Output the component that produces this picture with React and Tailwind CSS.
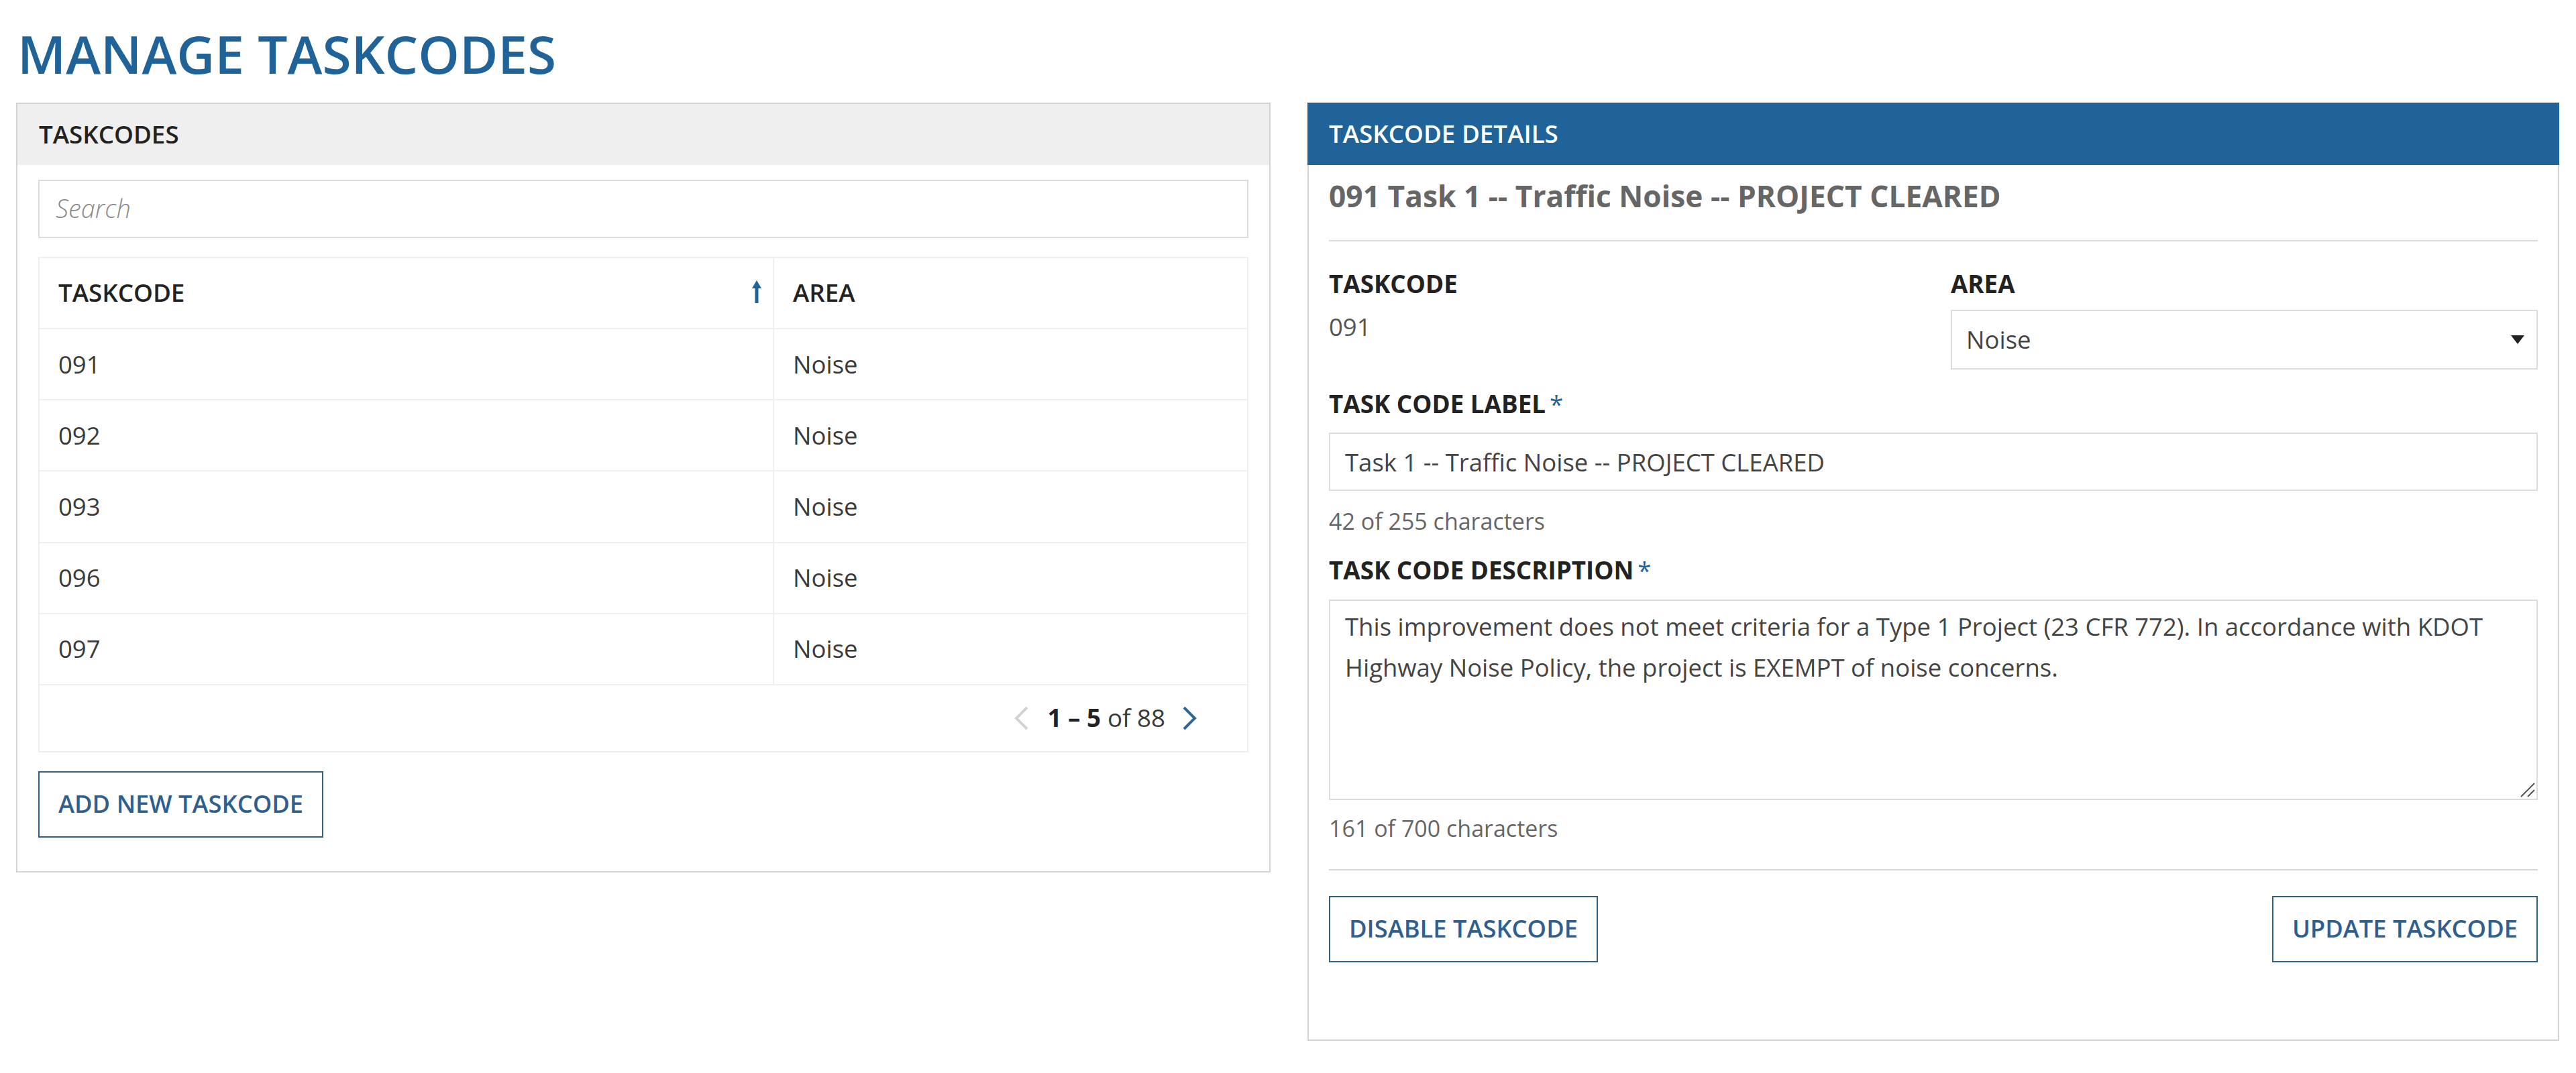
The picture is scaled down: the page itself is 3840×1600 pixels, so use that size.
const rows = ['091', '092', '093', '096', '097'];

const OutlineButton = ({ children }) => (
  <button className="h-[99px] px-[28px] pb-[3px] border-2 border-[#34607f] bg-white text-[36.3px] font-semibold text-[#2f5f8f] whitespace-nowrap">
    {children}
  </button>
);

const Label = ({ children, required }) => (
  <div className="text-[36.75px] leading-[46px] font-bold text-[#222]">
    {children}
    {required && <span className="ml-[6px] font-normal text-[#1f6399]">*</span>}
  </div>
);

const TaskcodeTable = () => (
  <div className="mt-[28px] border-2 border-[#efefef]">
    <div className="flex h-[106px] border-b-2 border-[#efefef] text-[36.75px] font-semibold text-[#222]">
      <div className="flex w-[1095px] items-center justify-between border-r-2 border-[#efefef] pl-[28px] pr-[15px]">
        <span>TASKCODE</span>
        <svg className="h-[34px] w-[18px] -translate-y-[2px]" viewBox="0 0 18 34" fill="#1f6399">
          <path d="M9 0 16 12H11.5V34H6.5V12H2Z" />
        </svg>
      </div>
      <div className="flex items-center pl-[28px]">AREA</div>
    </div>
    {rows.map((code) => (
      <div key={code} className="flex h-[106.2px] border-b-2 border-[#efefef] text-[36.5px] text-[#3a3a3a]">
        <div className="flex w-[1095px] items-center border-r-2 border-[#efefef] pl-[28px]">{code}</div>
        <div className="flex items-center pl-[28px]">Noise</div>
      </div>
    ))}
    <div className="flex h-[98px] items-center justify-end pr-[74px] text-[36.75px] text-[#3a3a3a]">
      <svg className="mr-[28px] h-[36px] w-[22px]" viewBox="0 0 22 36" fill="none" stroke="#d2d2d2" strokeWidth="4">
        <path d="M20 2 4 18 20 34" />
      </svg>
      <span className="font-bold text-[#222]">1 – 5</span>
      <span className="ml-[10px]">of 88</span>
      <svg className="ml-[26px] h-[36px] w-[22px]" viewBox="0 0 22 36" fill="none" stroke="#2f6596" strokeWidth="4">
        <path d="M2 2 18 18 2 34" />
      </svg>
    </div>
  </div>
);

const App = () => {
  return (
    <div className="h-[1600px] w-[3840px] bg-white font-['Open_Sans',sans-serif]">
      <h1 className="h-[153px] pl-[26px] pt-[30px] text-[78.4px] leading-[100px] font-semibold text-[#1f6399]">
        MANAGE TASKCODES
      </h1>
      <div className="flex items-start pl-[24px]">
        <section className="h-[1148px] w-[1870px] border-2 border-[#d4d4d4]">
          <div className="flex h-[91px] items-center bg-[#efefef] pl-[32px] text-[36.75px] font-semibold text-[#222]">
            TASKCODES
          </div>
          <div className="px-[31px] pt-[22px]">
            <input
              className="block h-[87px] w-full border-2 border-[#dcdcdc] px-[24px] pb-[3px] text-[38px] font-light italic text-[#333] outline-none placeholder:text-[#8a8a8a]"
              placeholder="Search"
            />
            <TaskcodeTable />
            <div className="mt-[28px]">
              <OutlineButton>ADD NEW TASKCODE</OutlineButton>
            </div>
          </div>
        </section>

        <section className="ml-[55px] h-[1399px] w-[1866px] border-2 border-[#d4d4d4] border-t-0">
          <div className="flex h-[93px] items-center -mx-[2px] bg-[#1f6399] pl-[32px] text-[36.75px] font-semibold text-white">
            TASKCODE DETAILS
          </div>
          <div className="px-[30px]">
            <h2 className="h-[114px] border-b-2 border-[#d9d9d9] pt-[18px] text-[44.3px] leading-[57px] font-bold text-[#666]">
              091 Task 1 -- Traffic Noise -- PROJECT CLEARED
            </h2>
            <div className="mt-[40px] flex">
              <div className="w-[927px]">
                <Label>TASKCODE</Label>
                <div className="mt-[18px] text-[36.5px] leading-[46px] text-[#555]">091</div>
              </div>
              <div className="flex-1">
                <Label>AREA</Label>
                <div className="relative mt-[16px]">
                  <select
                    defaultValue="Noise"
                    className="block h-[89px] w-full appearance-none border-2 border-[#dcdcdc] bg-white px-[21px] text-[36.5px] text-[#444] outline-none"
                  >
                    <option>Noise</option>
                  </select>
                  <svg className="absolute right-[20px] top-[38px] h-[13px] w-[20px]" viewBox="0 0 20 13" fill="#222">
                    <path d="M0 0H20L10 13Z" />
                  </svg>
                </div>
              </div>
            </div>
            <div className="mt-[28px]">
              <Label required>TASK CODE LABEL</Label>
              <input
                readOnly
                defaultValue="Task 1 -- Traffic Noise -- PROJECT CLEARED"
                className="mt-[20px] block h-[87px] w-full border-2 border-[#dcdcdc] px-[22px] text-[36.5px] text-[#444] outline-none"
              />
              <div className="mt-[24px] text-[34px] leading-[42px] text-[#666]">42 of 255 characters</div>
            </div>
            <div className="mt-[29px]">
              <Label required>TASK CODE DESCRIPTION</Label>
              <div className="relative mt-[21px]">
                <textarea
                  readOnly
                  defaultValue="This improvement does not meet criteria for a Type 1 Project (23 CFR 772). In accordance with KDOT Highway Noise Policy, the project is EXEMPT of noise concerns."
                  className="block h-[299px] w-full resize-none border-2 border-[#dcdcdc] px-[22px] pt-[8px] pb-[10px] text-[36.5px] leading-[61px] text-[#444] outline-none"
                />
                <svg className="absolute bottom-[4px] right-[4px] h-[22px] w-[22px]" viewBox="0 0 22 22" stroke="#555" strokeWidth="2">
                  <path d="M1 21 21 1M11 21 21 11" />
                </svg>
              </div>
              <div className="mt-[21px] text-[34px] leading-[42px] text-[#666]">161 of 700 characters</div>
            </div>
            <div className="mt-[40px] flex justify-between border-t-2 border-[#d9d9d9] pt-[38px]">
              <OutlineButton>DISABLE TASKCODE</OutlineButton>
              <OutlineButton>UPDATE TASKCODE</OutlineButton>
            </div>
          </div>
        </section>
      </div>
    </div>
  );
};

export default App;
